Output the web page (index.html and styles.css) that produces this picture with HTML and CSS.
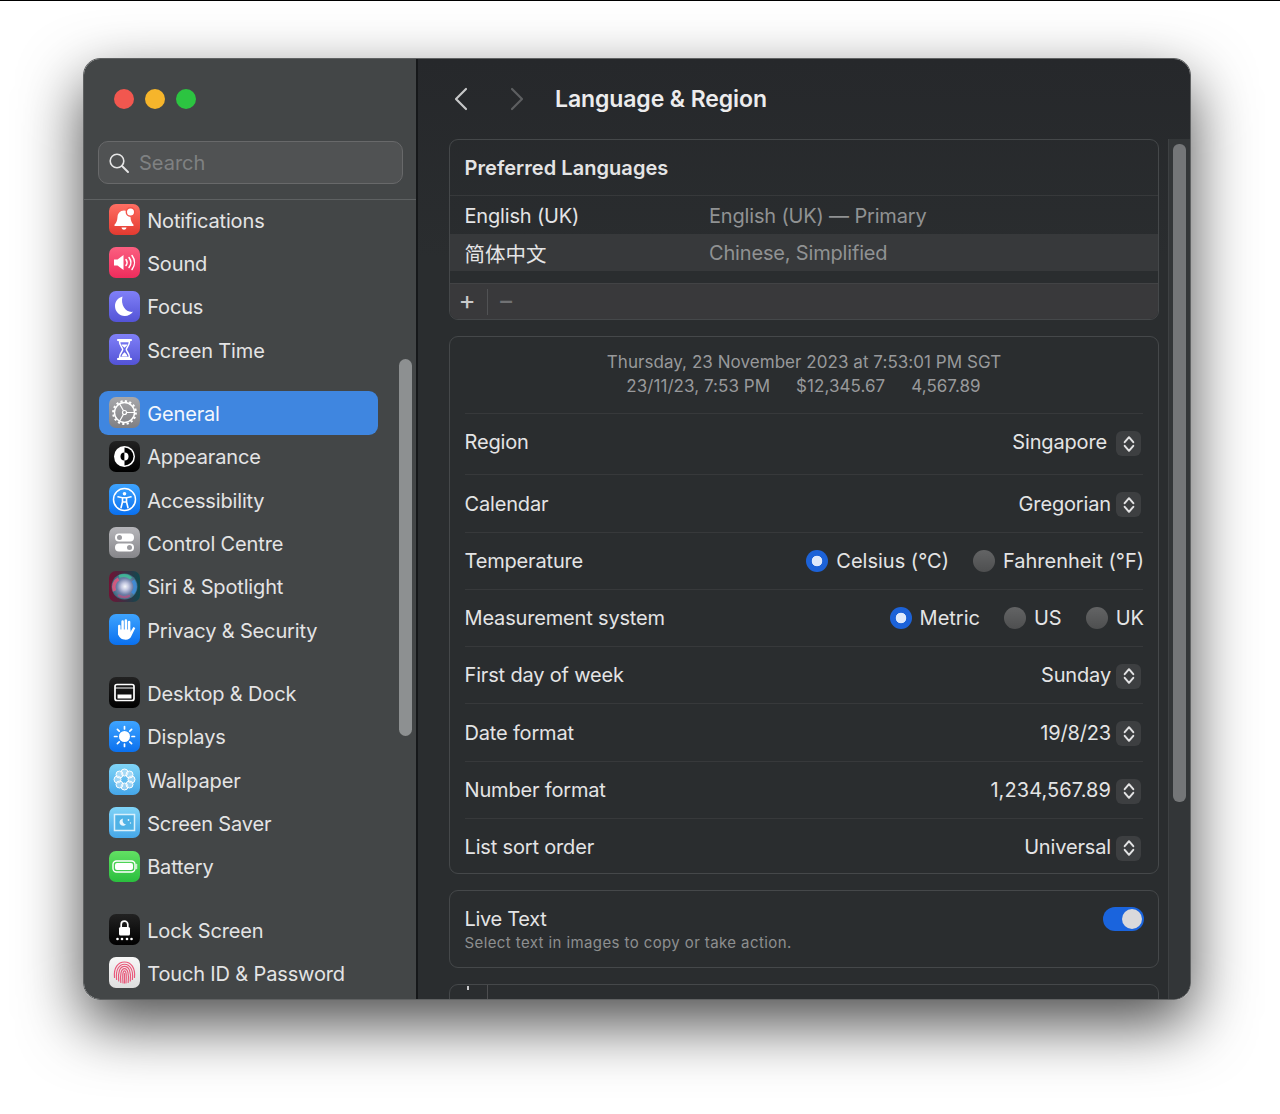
FILE: index.html
```html
<!DOCTYPE html>
<html lang="en">
<head>
<meta charset="utf-8">
<title>Language &amp; Region</title>
<link rel="stylesheet" href="styles.css">
</head>
<body>
<div class="window">
  <aside class="sidebar">
    <div class="side-head">
      <div class="lights"><span class="light red"></span><span class="light yellow"></span><span class="light green"></span></div>
      <div class="search">
        <svg class="search-ico" viewBox="0 0 22 22"><circle cx="9" cy="9" r="6.800" fill="none" stroke="#e6e6e6" stroke-width="1.600"/><path d="M14 14l6 6" stroke="#e6e6e6" stroke-width="2" stroke-linecap="round"/></svg>
        <span class="search-text">Search</span>
      </div>
    </div>
    <nav class="list">
      <div class="group">
        <div class="row"><span class="ico i-red"><svg viewBox="0 0 31 31"><path d="M15 6.500c-4 0-6.300 3-6.500 6.500-.2 3.500-1.200 5.800-3 7.800-.4.500-.1 1.200.6 1.200h17.800c.7 0 1-.7.600-1.200-1.800-2-2.800-4.300-3-7.800C21.300 9.500 19 6.500 15 6.500z" fill="#fff"/><path d="M12.500 23.500h5c-.3 1.500-1.300 2.200-2.500 2.200s-2.200-.7-2.500-2.200z" fill="#fff"/><circle cx="21.500" cy="8" r="4.200" fill="#fff" stroke="#f4544a" stroke-width="1.400"/></svg></span><span>Notifications</span></div>
        <div class="row"><span class="ico i-pink"><svg viewBox="0 0 31 31"><path d="M5 12.500h3.500L14.500 8v15l-6-4.500H5z" fill="#fff"/><path d="M17 12.500c1.300 1.800 1.300 4.200 0 6M20 10.500c2.300 3 2.300 7 0 10M23 8.500c3.200 4.200 3.200 9.800 0 14" fill="none" stroke="#fff" stroke-width="1.500" stroke-linecap="round"/></svg></span><span>Sound</span></div>
        <div class="row"><span class="ico i-indigo"><svg viewBox="0 0 31 31"><path d="M13.500 5.500C8.500 7 6 10.800 6 15c0 5.500 4.300 10 9.800 10 3.400 0 6.300-1.600 8.200-4.200-6.800 1.200-12.800-6.500-10.500-15.300z" fill="#fff"/></svg></span><span>Focus</span></div>
        <div class="row"><span class="ico i-indigo"><svg viewBox="0 0 31 31"><path d="M9 6h13M9 25h13" stroke="#fff" stroke-width="2.200" stroke-linecap="round"/><path d="M10.500 7.500h10c0 4.500-3.200 5.800-3.200 8s3.200 3.500 3.200 8h-10c0-4.500 3.200-5.800 3.200-8s-3.200-3.500-3.200-8z" fill="none" stroke="#fff" stroke-width="1.500"/><path d="M12.500 22.500c.5-2.300 2-3.200 3-4.300 1 1.100 2.500 2 3 4.300zM12.500 10.500h6c-.5 1.500-2 2.200-3 3.300-1-1.100-2.500-1.800-3-3.300z" fill="#fff"/></svg></span><span>Screen Time</span></div>
      </div>
      <div class="group">
        <div class="row active"><span class="ico i-gray"><svg viewBox="0 0 31 31"><circle cx="15.500" cy="15.500" r="10" fill="none" stroke="#fff" stroke-width="1.400"/><circle cx="15.500" cy="15.500" r="11.400" fill="none" stroke="#fff" stroke-width="2" stroke-dasharray="2.200 2.280"/><circle cx="15.500" cy="15.500" r="2" fill="none" stroke="#fff" stroke-width="1.200"/><path d="M17.500 15.500h8M14.500 13.800l-4-7M14.500 17.200l-4 7" stroke="#fff" stroke-width="1.200"/></svg></span><span>General</span></div>
        <div class="row"><span class="ico i-black"><svg viewBox="0 0 31 31"><circle cx="15.500" cy="15.500" r="10.500" fill="#fff"/><path d="M15.500 6.500a9 9 0 0 1 0 18z" fill="#000"/><path d="M15.500 11.500a4 4 0 0 0 0 8z" fill="#000"/><path d="M15.500 11.500a4 4 0 0 1 0 8z" fill="#fff"/></svg></span><span>Appearance</span></div>
        <div class="row"><span class="ico i-blue"><svg viewBox="0 0 31 31"><circle cx="15.500" cy="15.500" r="11" fill="none" stroke="#fff" stroke-width="1.500"/><circle cx="15.500" cy="9.800" r="1.800" fill="#fff"/><path d="M9 12.800l4.500 1v4l-1.500 6M22 12.800l-4.500 1v4l1.500 6M13.500 13.800h4M15.500 18l-1.500 0M15.500 18l1.500 0" fill="none" stroke="#fff" stroke-width="1.600" stroke-linecap="round"/></svg></span><span>Accessibility</span></div>
        <div class="row"><span class="ico i-silver"><svg viewBox="0 0 31 31"><rect x="6" y="6.500" width="19" height="8" rx="4" fill="#fff"/><circle cx="10.500" cy="10.500" r="2.500" fill="#9b9b9f"/><rect x="6" y="16.500" width="19" height="8" rx="4" fill="#fff"/><circle cx="20.500" cy="20.500" r="2.500" fill="#9b9b9f"/></svg></span><span>Control Centre</span></div>
        <div class="row"><span class="ico i-siri"><svg viewBox="0 0 31 31"><defs><radialGradient id="siri" cx="52%" cy="50%" r="50%"><stop offset="0" stop-color="#f6f8fc"/><stop offset=".28" stop-color="#c3c7e0"/><stop offset=".62" stop-color="#6f7fa8"/><stop offset="1" stop-color="#3a6d80"/></radialGradient></defs><circle cx="15.500" cy="15.500" r="13" fill="url(#siri)"/><path d="M5.500 20c-2-5 0-10 4-12" fill="none" stroke="#f0527a" stroke-width="3.500" opacity=".8"/><path d="M9 24c3 2.500 8 3 12 .5" fill="none" stroke="#d0487e" stroke-width="2.500" opacity=".6"/><path d="M10 5.500c4-1.500 9-1 12 2" fill="none" stroke="#3ec79a" stroke-width="3" opacity=".75"/><path d="M24 9.500c3 4 3 9-.5 13" fill="none" stroke="#3a8fe0" stroke-width="3.500" opacity=".8"/></svg></span><span>Siri &amp; Spotlight</span></div>
        <div class="row"><span class="ico i-blue"><svg viewBox="0 0 31 31"><path d="M10.300 12v8M13.600 7.500v8.500M16.900 6.500V16M20.100 8v9" stroke="#fff" stroke-width="2.500" stroke-linecap="round"/><path d="M9 15.500h12.400V18l3-5 1.900 1.100-3.900 7.900c-1.100 2.500-3 3.800-5.600 3.800-4.300 0-7.800-2.800-7.800-7z" fill="#fff"/></svg></span><span>Privacy &amp; Security</span></div>
      </div>
      <div class="group">
        <div class="row"><span class="ico i-black"><svg viewBox="0 0 31 31"><rect x="6" y="7.500" width="19" height="16" rx="2" fill="none" stroke="#fff" stroke-width="1.700"/><path d="M6 11h19" stroke="#fff" stroke-width="1"/><rect x="8.500" y="17.500" width="14" height="4" fill="#fff"/></svg></span><span>Desktop &amp; Dock</span></div>
        <div class="row"><span class="ico i-blue"><svg viewBox="0 0 31 31"><circle cx="15.500" cy="15.500" r="5.500" fill="#fff"/><path d="M15.500 5.500v2.500M15.500 23v2.500M5.500 15.500H8M23 15.500h2.500M8.400 8.400l1.800 1.800M20.800 20.800l1.800 1.800M22.600 8.400l-1.800 1.800M10.200 20.800l-1.800 1.800" stroke="#fff" stroke-width="1.700" stroke-linecap="round"/></svg></span><span>Displays</span></div>
        <div class="row"><span class="ico i-sky"><svg viewBox="0 0 31 31"><g fill="#cfeaf9" fill-opacity=".55" stroke="#fff" stroke-width="1"><circle cx="15.500" cy="8.500" r="3.500"/><circle cx="15.500" cy="22.500" r="3.500"/><circle cx="8.500" cy="15.500" r="3.500"/><circle cx="22.500" cy="15.500" r="3.500"/><circle cx="10.500" cy="10.500" r="3.500"/><circle cx="20.500" cy="10.500" r="3.500"/><circle cx="10.500" cy="20.500" r="3.500"/><circle cx="20.500" cy="20.500" r="3.500"/></g></svg></span><span>Wallpaper</span></div>
        <div class="row"><span class="ico i-sky"><svg viewBox="0 0 31 31"><rect x="5.500" y="7.500" width="20" height="16" fill="#4fb2e6" stroke="#d9f0fb" stroke-width="1.500"/><path d="M14 11.500c-2.500.6-3.500 2.300-3.500 3.800 0 2 1.700 3.500 3.600 3.500 1.300 0 2.400-.6 3-1.500-2.500.2-4.200-2.700-3.100-5.800z" fill="#e8f6fd"/><circle cx="19.500" cy="13" r=".9" fill="#e8f6fd"/><circle cx="21.500" cy="16" r=".7" fill="#e8f6fd"/></svg></span><span>Screen Saver</span></div>
        <div class="row"><span class="ico i-green"><svg viewBox="0 0 31 31"><rect x="4" y="10" width="22" height="11" rx="3.500" fill="none" stroke="#fff" stroke-width="1.400"/><rect x="6" y="12" width="18" height="7" rx="2" fill="#fff"/><path d="M27.500 13.500v4" stroke="#fff" stroke-opacity=".7" stroke-width="1.500" stroke-linecap="round"/></svg></span><span>Battery</span></div>
      </div>
      <div class="group">
        <div class="row"><span class="ico i-black"><svg viewBox="0 0 31 31"><path d="M12.200 13v-2.500c0-4.400 6.600-4.400 6.600 0V13" fill="none" stroke="#fff" stroke-width="1.700"/><rect x="10" y="13" width="11" height="8.500" rx="1.500" fill="#fff"/><g fill="#fff"><circle cx="8.500" cy="25" r="1.300"/><circle cx="13" cy="25" r="1.300"/><circle cx="18" cy="25" r="1.300"/><circle cx="22.500" cy="25" r="1.300"/></g></svg></span><span>Lock Screen</span></div>
        <div class="row"><span class="ico i-white"><svg viewBox="0 0 31 31"><g fill="none" stroke="#e9587a" stroke-width="1.150" stroke-linecap="round"><path d="M5.500 20.500C4.500 11 9 5 15.500 5s11 6 10 15.500"/><path d="M7.600 22.500C6.400 13 10 7.200 15.500 7.200s9.100 5.800 7.900 15.300"/><path d="M9.700 24c-1-8.500 1-14.600 5.800-14.600s6.800 6.100 5.800 14.600"/><path d="M11.800 25.500c-.8-7.500.2-13.900 3.700-13.900s4.500 6.400 3.700 13.900"/><path d="M14 26c-.5-5.500-.6-12.200 1.500-12.200s2 6.700 1.500 12.200"/><path d="M15.500 16.500V26"/></g></svg></span><span>Touch ID &amp; Password</span></div>
      </div>
    </nav>
    <div class="side-thumb"></div>
  </aside>

  <main class="main">
    <div class="content">
      <header class="head">
        <svg class="nav-ico" viewBox="0 0 16 26"><path d="M13 3L3 13l10 10" fill="none" stroke="#c6c7c8" stroke-width="2.200" stroke-linecap="round" stroke-linejoin="round"/></svg>
        <svg class="nav-ico next" viewBox="0 0 16 26"><path d="M3 3l10 10L3 23" fill="none" stroke="#5d5f61" stroke-width="2.200" stroke-linecap="round" stroke-linejoin="round"/></svg>
        <h1 class="title">Language &amp; Region</h1>
      </header>

      <section class="card">
        <h2 class="card-title">Preferred Languages</h2>
        <div class="lang first"><span class="lang-name">English (UK)</span><span class="muted">English (UK) — Primary</span></div>
        <div class="lang sel"><span class="lang-name cjk">简体中文</span><span class="muted">Chinese, Simplified</span></div>
        <div class="lang-gap"></div>
        <div class="tools"><span class="tool">+</span><span class="tool-sep"></span><span class="tool dim">−</span></div>
      </section>

      <section class="card">
        <div class="fmt">
          <div>Thursday, 23 November 2023 at 7:53:01 PM SGT</div>
          <div class="fmt-line"><span>23/11/23, 7:53 PM</span><span>$12,345.67</span><span>4,567.89</span></div>
        </div>
        <div class="set r-region"><span class="label">Region</span><div class="val wide">Singapore<span class="sel-btn"><svg viewBox="0 0 12 18"><path d="M1.700 7.200L6 2.200l4.300 5M1.700 10.800L6 15.800l4.300-5" fill="none" stroke="#e2e2e3" stroke-width="2" stroke-linecap="round" stroke-linejoin="round"/></svg></span></div></div>
        <div class="set r-cal"><span class="label">Calendar</span><div class="val">Gregorian<span class="sel-btn"><svg viewBox="0 0 12 18"><path d="M1.700 7.200L6 2.200l4.300 5M1.700 10.800L6 15.800l4.300-5" fill="none" stroke="#e2e2e3" stroke-width="2" stroke-linecap="round" stroke-linejoin="round"/></svg></span></div></div>
        <div class="set"><span class="label">Temperature</span><div class="radios"><label class="radio"><span class="dot on"></span>Celsius (°C)</label><label class="radio"><span class="dot"></span>Fahrenheit (°F)</label></div></div>
        <div class="set"><span class="label">Measurement system</span><div class="radios"><label class="radio"><span class="dot on"></span>Metric</label><label class="radio"><span class="dot"></span>US</label><label class="radio"><span class="dot"></span>UK</label></div></div>
        <div class="set"><span class="label">First day of week</span><div class="val">Sunday<span class="sel-btn"><svg viewBox="0 0 12 18"><path d="M1.700 7.200L6 2.200l4.300 5M1.700 10.800L6 15.800l4.300-5" fill="none" stroke="#e2e2e3" stroke-width="2" stroke-linecap="round" stroke-linejoin="round"/></svg></span></div></div>
        <div class="set r-date"><span class="label">Date format</span><div class="val">19/8/23<span class="sel-btn"><svg viewBox="0 0 12 18"><path d="M1.700 7.200L6 2.200l4.300 5M1.700 10.800L6 15.800l4.300-5" fill="none" stroke="#e2e2e3" stroke-width="2" stroke-linecap="round" stroke-linejoin="round"/></svg></span></div></div>
        <div class="set"><span class="label">Number format</span><div class="val num">1,234,567.89<span class="sel-btn"><svg viewBox="0 0 12 18"><path d="M1.700 7.200L6 2.200l4.300 5M1.700 10.800L6 15.800l4.300-5" fill="none" stroke="#e2e2e3" stroke-width="2" stroke-linecap="round" stroke-linejoin="round"/></svg></span></div></div>
        <div class="set last"><span class="label">List sort order</span><div class="val">Universal<span class="sel-btn"><svg viewBox="0 0 12 18"><path d="M1.700 7.200L6 2.200l4.300 5M1.700 10.800L6 15.800l4.300-5" fill="none" stroke="#e2e2e3" stroke-width="2" stroke-linecap="round" stroke-linejoin="round"/></svg></span></div></div>
      </section>

      <section class="card live">
        <div><div class="live-title">Live Text</div><div class="live-sub">Select text in images to copy or take action.</div></div>
        <span class="toggle"><span class="knob"></span></span>
      </section>

      <section class="card stub"><span class="stub-plus"></span><span class="stub-sep"></span></section>
    </div>
    <div class="track"><div class="thumb"></div></div>
  </main>
</div>
</body>
</html>
```

FILE: styles.css
```css
* { box-sizing: border-box; }
html, body { margin: 0; height: 1114px; overflow: hidden; }
body {
  background: #fff;
  border-top: 1px solid #000;
  padding: 57px 0 0 83px;
  font-family: Inter, "Noto Sans CJK SC", "Liberation Sans", sans-serif;
  font-size: 20px;
  color: #e4e4e5;
}
.window {
  width: 1108px;
  height: 942px;
  display: flex;
  overflow: hidden;
  border-radius: 17px;
  border: 1px solid #5f6162;
  box-shadow: 0 24px 62px rgba(0,0,0,.7);
}
.sidebar {
  position: relative;
  width: 334px;
  flex: none;
  background: #434647;
  border-right: 2px solid #16181a;
}
.side-head {
  height: 141px;
  border-bottom: 1px solid #5e6162;
  padding: 30px 13px 0 14px;
}
.lights { display: flex; gap: 11px; padding-left: 16px; }
.light { width: 20px; height: 20px; border-radius: 50%; }
.red { background: #f2574f; }
.yellow { background: #f6b52b; }
.green { background: #2cc441; }
.search {
  margin-top: 32px;
  height: 43px;
  border-radius: 10px;
  background: #505253;
  border: 1px solid #68696a;
  display: flex;
  align-items: center;
  gap: 9px;
  padding-left: 9px;
}
.search-ico { width: 22px; height: 22px; }
.search-text { color: #7f8182; }
.list { margin-top: -2px; }
.group { margin-bottom: 20px; }
.row {
  height: 43.33px;
  display: flex;
  align-items: center;
  gap: 7.5px;
  padding-left: 24.7px;
  letter-spacing: -.15px;
}
.row > span:last-child { margin-top: 2px; }
.row.active {
  background: #3f86e0;
  border-radius: 9px;
  margin: 0 38px 0 15px;
  padding-left: 9.7px;
  color: #f3f7fd;
}
.ico {
  width: 31px;
  height: 31px;
  flex: none;
  border-radius: 7px;
  display: block;
}
.ico svg { display: block; width: 31px; height: 31px; }
.i-red { background: linear-gradient(#ff6f63, #e33a30); }
.i-pink { background: linear-gradient(#fb5f80, #ee2c5c); }
.i-indigo { background: linear-gradient(#8080f8, #5353d6); }
.i-gray { background: linear-gradient(#a8a8ab, #7f7f83); }
.i-silver { background: linear-gradient(#b6b6ba, #86868a); }
.i-black { background: linear-gradient(#222, #000); }
.i-blue { background: linear-gradient(#3ea4ff, #0a70ef); }
.i-sky { background: linear-gradient(#80d4f7, #45a6e8); }
.i-green { background: linear-gradient(#62e063, #2abf3e); }
.i-white { background: linear-gradient(#f7f7f7, #dedede); }
.i-siri { background: linear-gradient(90deg, #701234, #0e4a50); }
.side-thumb {
  position: absolute;
  left: 315px;
  top: 300px;
  width: 13px;
  height: 377px;
  border-radius: 7px;
  background: #8d9091;
}

.main {
  flex: 1;
  min-width: 0;
  display: flex;
  background: linear-gradient(#26282b, #2a2d2f 200px);
}
.content { flex: 1; min-width: 0; padding: 0 9px 0 31px; }
.head {
  height: 80px;
  display: flex;
  align-items: center;
}
.nav-ico { width: 16px; height: 26px; margin-left: 4px; flex: none; }
.nav-ico.next { margin-left: 40px; }
.title {
  margin: 0 0 0 30px;
  font-size: 23px;
  font-weight: 600;
  letter-spacing: -.1px;
  color: #ececed;
}
.card {
  border: 1px solid #45484a;
  border-radius: 9px;
  margin-bottom: 16px;
  overflow: hidden;
}
.card-title {
  margin: 0;
  height: 56px;
  line-height: 56px;
  padding-left: 14.5px;
  font-size: 20px;
  font-weight: 600;
  letter-spacing: .05px;
  border-bottom: 1px solid #37393b;
}
.lang {
  height: 38px;
  display: grid;
  grid-template-columns: 244.500px 1fr;
  align-items: center;
  padding-left: 14.5px;
  letter-spacing: -.17px;
}
.lang.first { padding-top: 1px; }
.lang.sel { background: #37393b; height: 37px; }
.cjk { font-family: "Noto Sans CJK SC", sans-serif; font-size: 20.5px; letter-spacing: 0; }
.muted { color: #909293; letter-spacing: -.17px; }
.lang-gap { height: 12px; }
.tools {
  height: 36px;
  background: #39393b;
  border-top: 1px solid #424345;
  display: flex;
  align-items: center;
  padding-left: 8px;
}
.tool { width: 18px; text-align: center; font-size: 26px; line-height: 30px; margin-top: -4px; color: #c9cacb; }
.tool.dim { color: #717274; margin-left: 9px; }
.tool-sep { width: 1px; height: 26px; background: #515254; margin-left: 11px; }
.fmt {
  height: 77px;
  padding-top: 13px;
  margin: 0 15px;
  border-bottom: 1px solid #37393b;
  color: #98999b;
  font-size: 17px;
  line-height: 24px;
  letter-spacing: .05px;
  text-align: center;
}
.fmt-line { display: flex; justify-content: center; gap: 26px; margin-left: -1px; }
.set {
  height: 57px;
  margin: 0 15px;
  display: flex;
  align-items: center;
  justify-content: space-between;
  border-bottom: 1px solid #37393b;
}
.label { margin-left: -.5px; letter-spacing: -.17px; }
.r-region { height: 61px; padding-bottom: 4px; }
.r-cal { height: 58px; }
.r-date { height: 58px; }
.set.last { border-bottom: 0; height: 54px; padding-top: 2px; }
.val { display: flex; align-items: center; gap: 5px; margin-right: 2px; letter-spacing: -.15px; }
.val.num { letter-spacing: .08px; }
.val.wide { gap: 9px; }
.sel-btn {
  width: 25px;
  height: 25px;
  margin-top: 2px;
  border-radius: 6px;
  background: #3d3f41;
  display: flex;
  align-items: center;
  justify-content: center;
}
.r-region .sel-btn { margin-top: 3px; }
.sel-btn svg { width: 12px; height: 18px; }
.radios { display: flex; gap: 24px; margin-right: -1px; }
.radio { display: flex; align-items: center; gap: 8px; }
.dot {
  width: 22px;
  height: 22px;
  border-radius: 50%;
  background: linear-gradient(#636465, #4e4f50);
  display: block;
}
.dot.on {
  background: radial-gradient(circle, #dfe9fb 0 5px, #1c62d8 5.6px);
}
.live {
  height: 78px;
  display: flex;
  align-items: center;
  justify-content: space-between;
  padding: 0 14.5px;
}
.live-title { line-height: 24px; padding-top: 4px; letter-spacing: -.3px; }
.live-sub { font-size: 15px; line-height: 24px; color: #8d8f90; letter-spacing: .4px; }
.toggle {
  width: 41px;
  height: 24px;
  border-radius: 12px;
  background: #1a64dd;
  display: flex;
  justify-content: flex-end;
  padding: 2px;
  margin: 0 -.5px 20px 0;
}
.knob { width: 20px; height: 20px; border-radius: 50%; background: #d9d9db; }
.stub {
  height: 80px;
  position: relative;
  margin-bottom: 0;
}
.stub-plus {
  display: block;
  position: absolute;
  left: 17px;
  top: 1px;
  width: 2px;
  height: 4px;
  background: #c9cacb;
}
.stub-sep {
  display: block;
  position: absolute;
  left: 37px;
  top: 0;
  width: 1px;
  height: 14px;
  background: #4d4e50;
}
.track {
  width: 22px;
  flex: none;
  margin-top: 80px;
  background: #333638;
  border-left: 1px solid #3e4143;
  padding: 5px 4px 0;
}
.thumb {
  height: 658px;
  border-radius: 6px;
  background: #747678;
}
```
